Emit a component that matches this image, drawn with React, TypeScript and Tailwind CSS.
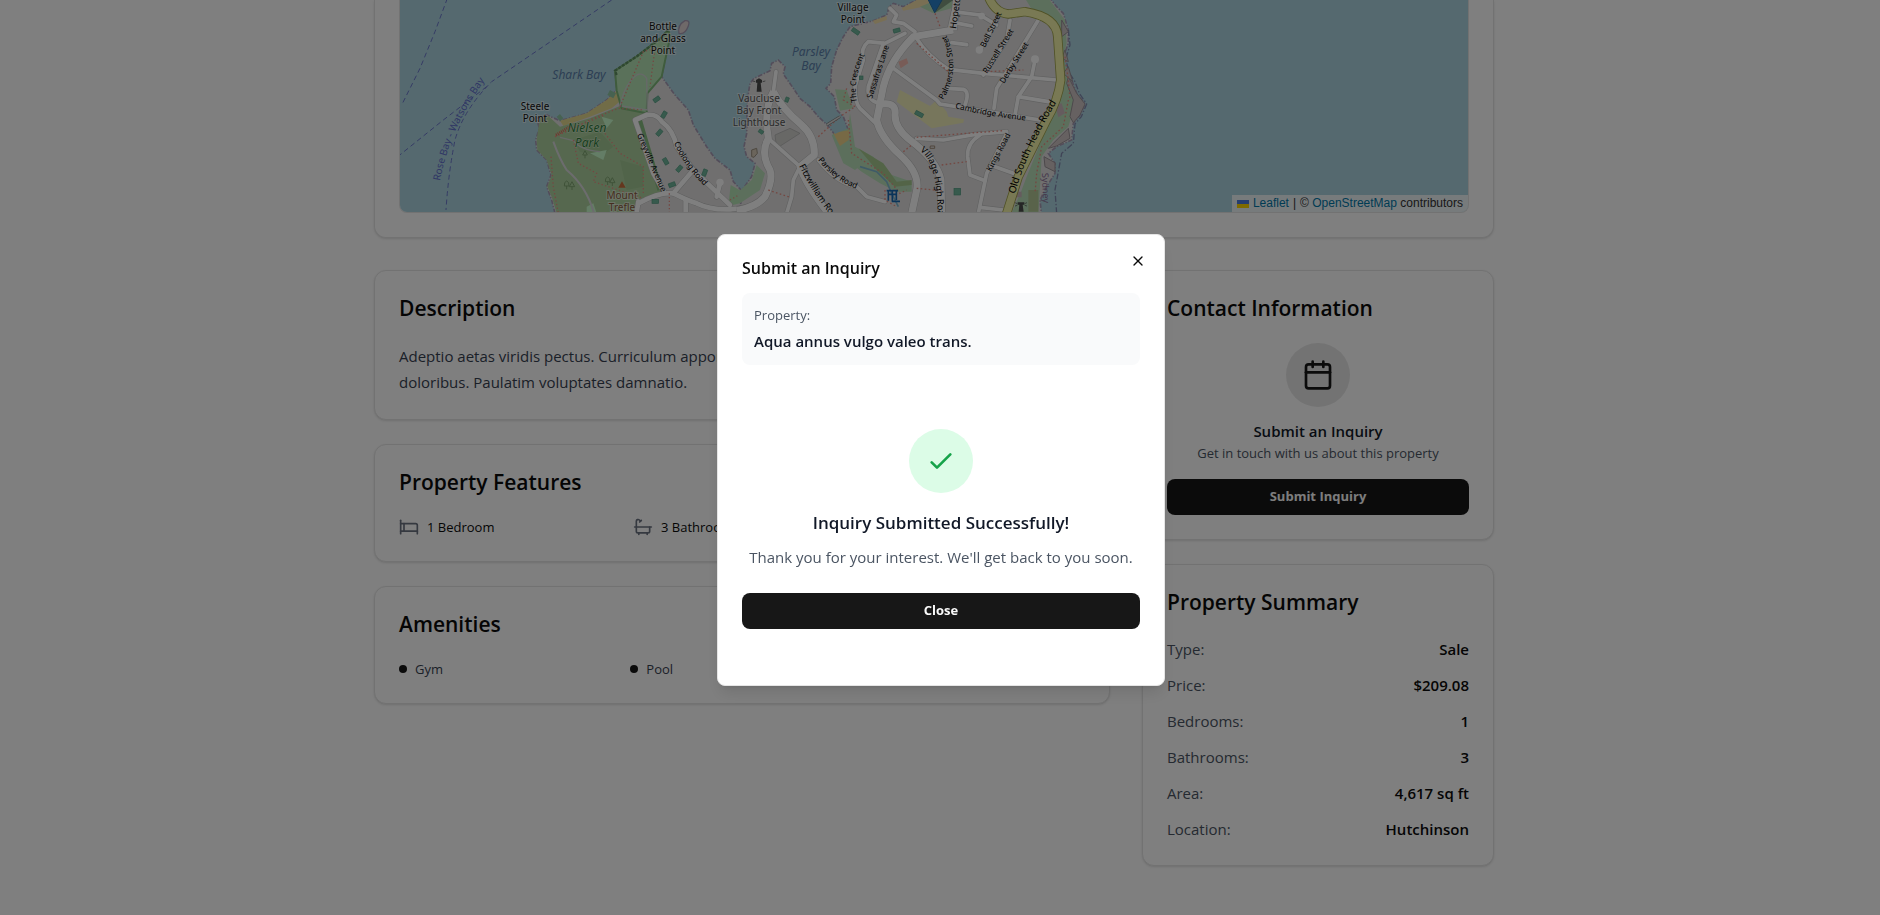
import React from "react";
import { Bath, Bed, Calendar, X } from "lucide-react";

const card = "rounded-xl border border-[#e5e5e5] bg-white p-6 shadow-sm";
const cardTitle = "text-[21px] leading-[26px] font-semibold text-[#0a0a0a]";
const primaryButton =
  "flex h-9 w-full items-center justify-center rounded-lg bg-[#171717] text-[13px] font-bold text-[#fafafa]";

const summary = [
  ["Type:", "Sale"],
  ["Price:", "$209.08"],
  ["Bedrooms:", "1"],
  ["Bathrooms:", "3"],
  ["Area:", "4,617 sq ft"],
  ["Location:", "Hutchinson"],
];

const westStreets = [
  "M860 345 L825 360 L880 520 L912 575",
  "M860 345 Q890 340 905 365 Q940 390 950 440 L1000 510 L1110 615",
  "M835 610 Q900 575 940 580 Q980 600 1010 610 Q1050 630 1110 628 Q1160 625 1215 600",
  "M940 580 L1000 510",
  "M1080 550 L1070 590",
  "M830 640 L835 605",
  "M977 600 L977 640",
];

const eastMinor = [
  "M85 415 L180 500 L160 540 L155 590 L140 640",
  "M108 215 L100 275",
  "M495 100 L435 130 L385 125 Q360 145 370 180 L345 260 Q345 310 360 325 L405 368",
  "M430 130 L385 260 Q380 290 400 303 L420 312",
  "M530 115 Q560 165 625 208 L730 220",
  "M460 205 L590 300 L600 312 L900 360",
  "M620 265 L670 268 Q690 275 675 315",
  "M630 80 L640 35 L720 45 L770 75",
  "M655 70 L695 78",
  "M635 128 L680 134",
  "M720 150 L770 60",
  "M810 60 L800 120 L730 225",
  "M895 60 L770 265 L762 325",
  "M730 220 L950 240",
  "M885 180 L875 230 L835 290 L825 345",
  "M835 290 L925 305",
  "M530 415 L610 420 L705 403 L800 395",
  "M720 405 Q680 430 683 470 L690 525 L735 542",
  "M800 400 L740 520 L715 640",
  "M765 500 L820 520",
  "M720 622 L790 630",
  "M450 25 L470 45 L460 65 L490 70 L525 95",
  "M235 480 Q290 550 350 560 L380 590 L435 605",
];

const eastMajor = [
  "M100 275 Q125 325 185 375 Q225 410 223 465 L180 500 Q195 550 265 640",
  "M100 275 Q70 330 85 415 Q60 460 90 510 Q100 540 75 590 Q50 620 -10 632",
  "M640 90 L520 110 Q450 180 430 260 L410 360 Q420 410 480 465 Q540 520 530 570 L515 640",
  "M425 312 Q470 305 465 345 Q465 385 510 420 Q590 480 603 540 L605 640",
  "M640 90 L650 -5",
];

const footways = [
  "M585 410 L700 355 L775 325 L850 330",
  "M585 410 L650 380 L735 345",
  "M640 420 L655 490 L710 520 L700 545 L850 595",
  "M735 400 L780 460 L850 500 L850 580",
  "M780 320 L850 155 L885 145 L870 260",
  "M573 470 L580 560 L595 640",
  "M928 580 L928 640",
  "M1110 600 L1190 555",
];

const eastFootways = [
  "M530 130 L625 215",
  "M585 40 L600 80",
  "M235 410 L300 350 L345 320",
  "M345 320 L310 300 L320 265",
  "M325 360 L335 460 L430 520 L480 580 L500 570",
  "M85 570 L150 592",
  "M530 412 L705 398 L790 392",
  "M605 495 L680 485",
  "M530 565 L605 572",
  "M490 455 L515 435",
  "M985 300 L970 380 L905 440 L890 520 L885 580",
  "M975 170 L985 240 L990 300",
  "M740 215 L850 210",
  "M435 570 L435 600 L470 620",
];

const buildingsWest = [
  [880, 292, -35],
  [902, 338, -60],
  [888, 392, -50],
  [907, 478, 60],
  [948, 500, -50],
  [1024, 512, -70],
  [926, 548, -20],
  [876, 598, 0],
];

function CityMap() {
  return (
    <svg
      viewBox="399 0 1070 212"
      preserveAspectRatio="xMidYMax slice"
      className="h-full w-full"
      role="img"
      aria-label="Map of the property location"
    >
      <defs>
        <path id="ferry" d="M440 181 Q449 130 485 80" />
        <path id="greyville" d="M637 135 Q648 160 663 196" />
        <path id="coolong" d="M674 143 Q683 165 708 190" />
        <path id="crescent" d="M857 102 Q852 80 866 52" />
        <path id="palmerston" d="M943 100 Q963 68 944 30" />
        <path id="cambridge" d="M955 108 Q985 116 1030 121" />
        <path id="parsley" d="M818 160 Q835 182 860 190" />
        <path id="fitz" d="M799 166 Q812 192 834 220" />
        <path id="village" d="M920 151 Q938 162 938 222" />
        <path id="oldsouth" d="M1015 194 Q1027 150 1058 100" />
      </defs>
      <rect x="0" y="0" width="1880" height="212" fill="#aad3df" />

      <g transform="translate(360 0) scale(0.33333)" fill="none">
        <path
          d="M585 640 L575 600 L560 560 L573 525 L560 480 L530 450 L527 420 L538 385 L530 355 L560 345 L600 362 L680 340 L740 300 L770 270 L765 212 L800 190 L832 168 L880 132 L905 112 L925 88 L930 112 L918 165 L905 230 L945 285 L985 330 L1000 375 L1040 440 L1065 475 L1110 510 L1120 545 L1145 572 L1165 550 L1185 510 L1215 510 L1215 640 Z"
          fill="#e0dfdf"
          stroke="#a79bb5"
          strokeWidth="5"
          strokeDasharray="14 5 4 5"
        />
        <path d="M600 362 L680 340 L740 300 L770 272 L785 300 L755 325 L690 350 L610 378 Z" fill="#e3d88f" />
        <path
          d="M590 640 L575 590 L562 560 L575 525 L560 480 L532 450 L530 420 L540 350 L565 348 L600 380 L690 355 L780 318 L850 340 L825 365 L880 520 L910 572 L835 605 L828 640 Z"
          fill="#add19e"
        />
        <path d="M640 420 L720 395 L760 440 L720 470 L660 455 Z M780 480 L850 500 L850 560 L800 570 Z" fill="#a2c994" />
        <path d="M835 350 L900 570" stroke="#86bd80" strokeWidth="16" />
        <path
          d="M765 212 L832 168 L905 112 L925 88 L930 112 L905 230 L862 280 L860 340 L785 325 L770 272 Z"
          fill="#b5e3b5"
          stroke="#7fb87a"
          strokeWidth="6"
        />
        <path d="M770 225 L765 212 L832 168 L905 112 L925 90" stroke="#5f8f62" strokeWidth="7" strokeDasharray="9 4" />
        <path d="M742 285 L750 270 L768 280 L760 295 Z M590 350 L600 342 L610 355 L600 364 Z" fill="#8fc5a3" />
        <path d="M680 620 L700 610 L710 640 L680 640 Z M690 460 L740 450 L730 480 Z M725 350 L760 360 L740 385 Z" fill="#c8facc" />
        <path d="M1112 555 L1145 574 L1165 552 L1185 510 L1195 490 L1215 490 L1215 580 L1160 605 L1105 618 Z" fill="#b5e3b5" />
        <path d="M957 100 Q952 75 975 62 Q992 60 985 78 Q975 105 957 100 Z" fill="#ded2d2" stroke="#a79bb5" strokeWidth="4" />
        <g stroke="#bdbdbd" strokeWidth="17" strokeLinecap="round" strokeLinejoin="round">
          {westStreets.map((d) => <path key={d} d={d} />)}
        </g>
        <g stroke="#ffffff" strokeWidth="14" strokeLinecap="round" strokeLinejoin="round">
          {westStreets.map((d) => <path key={d} d={d} />)}
        </g>
        <circle cx="1080" cy="547" r="11" fill="#ffffff" />
        <path d="M580 425 Q600 480 620 510 Q680 560 702 640" stroke="#d9d9dc" strokeWidth="6" />
        <path d="M600 412 L640 422 Q660 450 720 455 M780 320 Q790 270 810 245 Q840 205 860 235 L862 330 L785 318" stroke="#cfd2d2" strokeWidth="4" />
        <g stroke="#e88f84" strokeWidth="4" strokeDasharray="4 7">
          {footways.map((d) => <path key={d} d={d} />)}
        </g>
        <path d="M588 405 L632 378" stroke="#e26c5c" strokeWidth="8" strokeDasharray="3 3" />
        {buildingsWest.map(([x, y, r]) => (
          <rect key={`${x}-${y}`} x={x} y={y} width="20" height="12" fill="#6fb59a" stroke="#4f9a80" strokeWidth="2" transform={`rotate(${r} ${x + 10} ${y + 6})`} />
        ))}
        <path d="M775 563 L786 544 L797 563 Z" fill="#c86f3c" />
        <g stroke="#7fa572" strokeWidth="3">
          <path d="M620 568 V558 M613 558 Q612 545 620 543 Q628 545 627 558 Z M636 570 V560 M628 560 L636 545 L644 560 Z" />
          <path d="M743 555 V545 M736 545 Q735 533 743 531 Q751 533 750 545 Z M757 558 V548 M749 548 L757 533 L765 548 Z" />
          <path d="M675 475 V465 M668 465 L675 452 L682 465 Z" />
        </g>
        <g stroke="#6b76c9" strokeWidth="3" strokeDasharray="15 10">
          <path d="M262 -5 L225 95 L180 205 L125 315" />
          <path d="M755 0 L395 245 Q310 330 285 420 Q265 520 258 630" />
          <path d="M380 260 L250 360 L118 466" />
        </g>
      </g>

      <g transform="translate(740 0) scale(0.33333)" fill="none">
        <path
          d="M0 640 L5 572 L35 530 L45 490 L20 470 L12 440 L20 400 L22 300 L30 250 L42 235 L90 212 L95 190 L115 180 L135 200 L130 222 L160 265 L180 295 L210 320 L235 350 L262 375 L285 405 L325 390 L310 350 L290 330 L283 290 L258 265 L272 250 L275 200 L290 150 L310 110 L330 80 L370 70 L400 62 L440 45 L448 20 L460 10 L490 20 L510 10 L540 -5 L930 -5 L950 20 L970 40 L985 90 L985 130 L970 170 L975 210 L995 240 L1010 280 L1035 312 L1020 345 L1000 370 L995 420 L950 440 L925 460 L945 490 L945 520 L920 560 L900 600 L905 645 Z"
          fill="#e0dfdf"
          stroke="#a79bb5"
          strokeWidth="5"
          strokeDasharray="14 5 4 5"
        />
        <path d="M985 90 L990 135 L978 175 L985 215 L1005 245 L1018 280 L1040 312 L1024 350 L1005 372 L1000 430 L965 460 L945 570 L950 640" stroke="#8089ad" strokeWidth="4" strokeDasharray="18 6 4 6" />
        <path d="M855 -5 L925 -5 L975 60 L980 130 L970 170 L985 230 L1000 280 L1000 330 L985 380 L940 420 L905 470 L900 560 L895 640 L815 640 L845 570 L860 530 L945 320 L965 240 L958 90 L935 60 L880 35 Z" fill="#b8dfb8" />
        <path d="M985 230 L1010 280 L1035 312 L1020 345 L1000 368 L990 350 L1000 300 L980 250 Z M950 438 L990 415 L985 385 L955 415 L925 445 Z M912 470 L945 488 L945 515 L915 500 Z" fill="#cdc2c2" stroke="#9a9298" strokeWidth="3" />
        <path d="M965 60 L985 95 L965 110 Z M975 150 L965 175 L985 185 Z M985 200 L970 220 L998 245 Z" fill="#c9c2c2" stroke="#9a9298" strokeWidth="3" />
        <path d="M865 570 H895 V635 H865 Z" fill="#b3c795" />
        <path d="M945 315 L965 310 L975 340 L955 352 Z M820 575 H845 V592 H820 Z" fill="#cbb9bd" />
        <path d="M480 270 L570 318 L590 300 L620 335 L625 350 L672 358 L670 368 L575 385 L470 305 Z" fill="#efecb8" />
        <path d="M485 25 L530 0 L575 -5 L560 18 L490 32 Z" fill="#f2dea8" />
        <path d="M398 62 L440 48 L440 60 L405 72 Z" fill="#f2dea8" />
        <path d="M540 20 L590 0 L640 -5 L635 25 L580 40 Z M285 268 L320 270 L340 325 L300 332 Z" fill="#b8dfb8" />
        <path d="M275 405 L325 385 L330 340 L345 440 L370 490 L345 510 L310 490 Z" fill="#b8dfb8" />
        <path d="M280 400 L328 390 L326 420 L300 438 Z" fill="#eed38a" />
        <path d="M345 440 L400 470 L440 520 L515 545 L515 575 L470 575 L420 550 L365 515 L340 495 Z" fill="#b8dfb8" />
        <path d="M355 445 L430 490 L470 545 L515 540 L515 555 L465 560 L410 510 Z" fill="#a6c98f" />
        <path d="M360 500 L410 515 L440 545 L455 580 L475 620" stroke="#7fb6cf" strokeWidth="5" />
        <path d="M270 365 L300 350 L318 385 L285 402 Z" fill="#aad3df" />
        <path d="M-10 580 L35 540 L50 495 L75 520 L60 570 L0 610 Z" fill="#b8dfb8" />
        <path d="M475 185 L500 175 L505 190 L482 205 Z" fill="#f0b8ae" />
        <path d="M105 405 L150 385 L180 400 L110 445 Z" fill="#d0d0cc" stroke="#aaa" strokeWidth="2" />
        <path d="M35 470 V450 L50 445 L52 460 L42 472 Z" fill="#d7cbb8" stroke="#9a9080" strokeWidth="3" />
        <g stroke="#c4c4c4" strokeWidth="15" strokeLinecap="round" strokeLinejoin="round">
          {eastMinor.map((d) => <path key={d} d={d} />)}
        </g>
        <g stroke="#bdbdbd" strokeWidth="24" strokeLinejoin="round">
          {eastMajor.map((d) => <path key={d} d={d} />)}
        </g>
        <g stroke="#ffffff" strokeWidth="11" strokeLinecap="round" strokeLinejoin="round">
          {eastMinor.map((d) => <path key={d} d={d} />)}
        </g>
        <g stroke="#ffffff" strokeWidth="21" strokeLinejoin="round">
          {eastMajor.map((d) => <path key={d} d={d} />)}
        </g>
        <circle cx="885" cy="178" r="12" fill="#ffffff" />
        <circle cx="718" cy="150" r="11" fill="#ffffff" />
        <circle cx="725" cy="48" r="10" fill="#ffffff" />
        <path d="M745 -10 Q765 38 805 42 L855 35 Q950 50 953 110 L962 240 Q955 300 920 360 L835 530 L800 640" stroke="#a0a34d" strokeWidth="28" />
        <path d="M745 -10 Q765 38 805 42 L855 35 Q950 50 953 110 L962 240 Q955 300 920 360 L835 530 L800 640" stroke="#f3f3a8" strokeWidth="23" />
        <g stroke="#e88f84" strokeWidth="4" strokeDasharray="5 7">
          {eastFootways.map((d) => <path key={d} d={d} />)}
        </g>
        <path d="M260 375 L300 350" stroke="#777777" strokeWidth="8" />
        <path d="M260 375 L300 350" stroke="#d8d8d8" strokeWidth="5" />
        <g fill="#6fb59a" stroke="#4f9a80" strokeWidth="2">
          <rect x="335" y="88" width="24" height="12" transform="rotate(35 347 94)" />
          <rect x="460" y="86" width="20" height="11" transform="rotate(-15 470 91)" />
          <rect x="525" y="336" width="25" height="12" transform="rotate(28 537 342)" />
          <rect x="642" y="565" width="20" height="20" />
          <rect x="136" y="292" width="10" height="14" transform="rotate(20 141 299)" />
          <rect x="56" y="390" width="14" height="10" transform="rotate(35 63 395)" />
          <rect x="358" y="228" width="11" height="11" />
        </g>
        <g fill="#4a4a4a">
          <path d="M50 275 L52 248 H48 V240 L57 235 L66 240 V248 H62 L65 275 Z" />
          <path d="M836 635 L838 614 H833 V607 H853 V614 H848 L851 635 Z" />
        </g>
        <path d="M825 608 L832 611 M825 618 L832 616 M861 608 L854 611 M861 618 L854 616 M38 243 L46 245 M76 243 L68 245" stroke="#4a4a4a" strokeWidth="2" />
        <path d="M440 572 H474 M445 572 V602 M457 572 V602 M469 572 V600 M445 583 H469 M455 604 H480" stroke="#1769b3" strokeWidth="5" />
        <path d="M570 445 H584 V438 H571 Z" stroke="#a08c78" strokeWidth="3" />
        <path d="M605 25 L640 0 L605 -10 L585 38 Z" fill="#000" opacity="0.3" />
        <path d="M560 -10 H612 L584 38 Z" fill="#2a81cb" stroke="#2a6ea6" strokeWidth="3" />
      </g>

      <g
        fontFamily='"Noto Sans", sans-serif'
        fontSize="10"
        textAnchor="middle"
        fill="#111111"
        stroke="#ffffff"
        strokeOpacity="0.5"
        strokeWidth="2"
        paintOrder="stroke"
      >
        <text x="663" y="30">Bottle</text>
        <text x="663" y="42">and Glass</text>
        <text x="663" y="54">Point</text>
        <text x="535" y="110">Steele</text>
        <text x="535" y="122">Point</text>
        <text x="853" y="11">Village</text>
        <text x="853" y="23">Point</text>
        <g fill="#555555">
          <text x="759" y="102">Vaucluse</text>
          <text x="759" y="114">Bay Front</text>
          <text x="759" y="126">Lighthouse</text>
        </g>
        <g fill="#8a5a3c">
          <text x="622" y="199">Mount</text>
          <text x="622" y="211">Trefle</text>
        </g>
        <g fill="#2f7d3a" fontStyle="italic" fontSize="12" strokeWidth="1">
          <text x="587" y="132">Nielsen</text>
          <text x="587" y="147">Park</text>
        </g>
      </g>
      <g fontFamily='"Noto Sans", sans-serif' fontStyle="italic" fontSize="12" textAnchor="middle" fill="#5a7ea8">
        <text x="579" y="79">Shark Bay</text>
        <text x="811" y="56">Parsley</text>
        <text x="811" y="70">Bay</text>
      </g>
      <g fontFamily='"Noto Sans", sans-serif' fontSize="8" fill="#000000">
        <text fontSize="10" fill="#5f6dc9"><textPath href="#ferry">Rose Bay - Watsons Bay</textPath></text>
        <text><textPath href="#greyville">Greyville Avenue</textPath></text>
        <text><textPath href="#coolong">Coolong Road</textPath></text>
        <text><textPath href="#crescent">The Crescent</textPath></text>
        <text transform="translate(872 99) rotate(-72)">Sassafras Lane</text>
        <text><textPath href="#palmerston">Palmerston Street</textPath></text>
        <text fontSize="9" transform="translate(956 29) rotate(-82)">Hopetoun</text>
        <text transform="translate(985 48) rotate(-64)">Bell Street</text>
        <text transform="translate(987 74) rotate(-58)">Russell Street</text>
        <text transform="translate(1004 84) rotate(-58)">Derby Street</text>
        <text><textPath href="#cambridge">Cambridge Avenue</textPath></text>
        <text transform="translate(991 172) rotate(-62)">Kings Road</text>
        <text><textPath href="#parsley">Parsley Road</textPath></text>
        <text fontSize="9"><textPath href="#fitz">Fitzwilliam Road</textPath></text>
        <text fontSize="9"><textPath href="#village">Village High Road</textPath></text>
        <text fontSize="10"><textPath href="#oldsouth">Old South Head Road</textPath></text>
        <text fontSize="9" fill="#8a6f96" transform="translate(1042 173) rotate(88)">Sydney</text>
      </g>
    </svg>
  );
}

function MapCard() {
  return (
    <section className="rounded-b-xl border border-t-0 border-[#e5e5e5] bg-white px-6 pb-6 shadow-sm">
      <div className="relative h-[213px] overflow-hidden rounded-b-lg border border-t-0 border-[#e5e5e5]">
        <CityMap />
        <div className="absolute right-0 bottom-0 flex items-center gap-1 bg-white/80 px-[5px] font-['Liberation_Sans',sans-serif] text-xs leading-[17px] text-[#333333]">
          <svg viewBox="0 0 12 8" className="h-2 w-3" aria-hidden="true">
            <path fill="#4c7be1" d="M0 0h12v4H0z" />
            <path fill="#ffd500" d="M0 4h12v4H0z" />
          </svg>
          <a href="#leaflet" className="text-[#0078a8]">Leaflet</a>
          <span>|</span>
          <span>
            © <a href="#osm" className="text-[#0078a8]">OpenStreetMap</a> contributors
          </span>
        </div>
      </div>
    </section>
  );
}

function InquiryDialog() {
  return (
    <div className="fixed inset-0 flex items-center justify-center bg-black/50 pt-1 pl-0.5">
      <div
        role="dialog"
        aria-modal="true"
        aria-labelledby="inquiry-title"
        className="relative flex w-full max-w-md flex-col gap-4 rounded-lg border border-[#e5e5e5] bg-white p-6 shadow-lg"
      >
        <h2 id="inquiry-title" className="text-base leading-[18px] font-semibold text-[#0a0a0a]">
          Submit an Inquiry
        </h2>
        <div className="flex flex-col gap-1 rounded-lg bg-[#f9fafb] p-3">
          <p className="text-[13px] leading-5 text-[#4b5563]">Property:</p>
          <p className="text-[15px] leading-6 font-semibold text-[#111827]">Aqua annus vulgo valeo trans.</p>
        </div>
        <div className="flex flex-col items-center pt-12 pb-8 text-center">
          <div className="mb-4 flex h-16 w-16 items-center justify-center rounded-full bg-[#dcfce7]">
            <svg viewBox="0 0 24 24" className="h-8 w-8" fill="none" stroke="#16a34a" strokeWidth="2" strokeLinecap="round" strokeLinejoin="round" aria-hidden="true">
              <path d="M5 13l4 4L19 7" />
            </svg>
          </div>
          <h3 className="mb-2 text-[17px] leading-7 font-semibold text-[#111827]">Inquiry Submitted Successfully!</h3>
          <p className="mb-6 text-[15px] leading-6 whitespace-nowrap text-[#4b5563]">
            Thank you for your interest. We'll get back to you soon.
          </p>
          <button type="button" className={primaryButton}>Close</button>
        </div>
        <button type="button" aria-label="Close dialog" className="absolute top-4 right-4 p-0.5 text-[#0a0a0a]">
          <X className="h-4 w-4" />
        </button>
      </div>
    </div>
  );
}

export default function App() {
  return (
    <div className="min-h-screen bg-white font-['Open_Sans',sans-serif] text-[#0a0a0a]">
      <main className="pr-3 pb-12">
        <div className="mx-auto flex max-w-6xl flex-col gap-8 px-4">
          <MapCard />
          <div className="grid grid-cols-3 items-start gap-8">
            <div className="col-span-2 flex flex-col gap-6">
              <section className={card}>
                <h2 className={cardTitle}>Description</h2>
                <p className="mt-[22px] text-[15px] leading-[26px] text-[#374151]">
                  Adeptio aetas viridis pectus. Curriculum appono cunctatio voluptas tenetur
                  <br />
                  doloribus. Paulatim voluptates damnatio.
                </p>
              </section>
              <section className={card}>
                <h2 className={cardTitle}>Property Features</h2>
                <ul className="mt-[22px] grid grid-cols-3 gap-4 text-[13px] leading-5">
                  <li className="flex items-center gap-2">
                    <Bed className="h-5 w-5 text-[#6b7280]" />
                    1 Bedroom
                  </li>
                  <li className="flex items-center gap-2">
                    <Bath className="h-5 w-5 text-[#6b7280]" />
                    3 Bathrooms
                  </li>
                </ul>
              </section>
              <section className={card}>
                <h2 className={cardTitle}>Amenities</h2>
                <ul className="mt-[22px] grid grid-cols-3 gap-2 text-[13px] leading-5 text-[#374151]">
                  <li className="flex items-center gap-2">
                    <span className="h-2 w-2 rounded-full bg-[#171717]" />
                    Gym
                  </li>
                  <li className="flex items-center gap-2">
                    <span className="h-2 w-2 rounded-full bg-[#171717]" />
                    Pool
                  </li>
                </ul>
              </section>
            </div>
            <div className="flex flex-col gap-6">
              <section className={card}>
                <h2 className={cardTitle}>Contact Information</h2>
                <div className="mt-[22px] flex flex-col items-center text-center">
                  <div className="mb-4 flex h-16 w-16 items-center justify-center rounded-full bg-[#171717]/10">
                    <Calendar className="h-8 w-8 text-[#171717]" />
                  </div>
                  <h3 className="mb-1 text-[15px] leading-4 font-semibold text-[#111827]">Submit an Inquiry</h3>
                  <p className="mb-4 text-[13px] leading-5 text-[#4b5563]">Get in touch with us about this property</p>
                  <button type="button" className={primaryButton}>Submit Inquiry</button>
                </div>
              </section>
              <section className={card}>
                <h2 className={cardTitle}>Property Summary</h2>
                <dl className="mt-[22px] flex flex-col gap-3 text-[15px] leading-6">
                  {summary.map(([label, value]) => (
                    <div key={label} className="flex justify-between">
                      <dt className="text-[#4b5563]">{label}</dt>
                      <dd className="font-semibold">{value}</dd>
                    </div>
                  ))}
                </dl>
              </section>
            </div>
          </div>
        </div>
      </main>
      <InquiryDialog />
    </div>
  );
}
